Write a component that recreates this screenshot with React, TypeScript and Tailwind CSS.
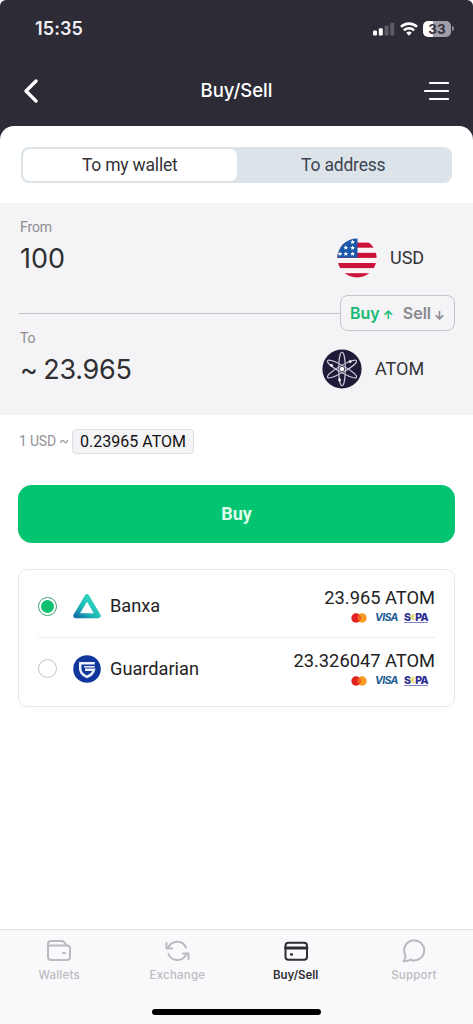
import React, { useState } from 'react';

type Side = 'buy' | 'sell';

interface Provider {
    id: string;
    name: string;
    amount: string;
    logo: React.ReactNode;
}

const StatusIcons: React.FC = () => (
    <div className="flex items-center">
        <svg width="22" height="14" viewBox="0 0 22 14" className="block">
            <rect x="0" y="8.5" width="4" height="5" rx="1" fill="#fff" />
            <rect x="5.8" y="6.2" width="4" height="7.3" rx="1" fill="#fff" />
            <rect x="11.6" y="3.4" width="4" height="10.1" rx="1" fill="#5c5c66" />
            <rect x="17.2" y="0.8" width="4" height="12.7" rx="1" fill="#5c5c66" />
        </svg>
        <svg width="18" height="14" viewBox="0 0 18 14" className="block ml-[5px]">
            <path d="M1 4.9a11.4 11.4 0 0 1 16 0" fill="none" stroke="#fff" strokeWidth="2.7" />
            <path d="M3.9 8.4a7.2 7.2 0 0 1 10.2 0" fill="none" stroke="#fff" strokeWidth="2.5" />
            <path d="M6.2 10.8a4 4 0 0 1 5.6 0L9 13.8Z" fill="#fff" />
        </svg>
        <div className="ml-[5px] h-4 w-7 rounded-[5px] bg-[linear-gradient(90deg,#fff_36%,#a09fa8_36%)] text-center font-['Inter'] text-[13.5px] leading-4 font-bold text-[#34333f]">33</div>
        <div className="ml-px h-[5px] w-[2px] rounded-r-full bg-[#8a8992]" />
    </div>
);

const UsFlag: React.FC = () => (
    <svg width="40" height="40" viewBox="0 0 40 40" className="block">
        <defs>
            <clipPath id="flag"><circle cx="20" cy="20" r="19.6" /></clipPath>
        </defs>
        <g clipPath="url(#flag)">
            <rect width="40" height="40" fill="#fbf3f5" />
            {[4.6, 14.8, 25, 35.2].map(y => (
                <rect key={y} x="0" y={y} width="40" height="5.1" fill="#cb1238" />
            ))}
            <rect width="20.5" height="19.8" fill="#1b57a8" />
            {[[15.6, 4], [8.8, 9.6], [15.6, 9.8], [3, 15.8], [8.8, 15.8], [15.6, 15.8]].map(([x, y]) => (
                <path key={`${x}-${y}`} transform={`translate(${x} ${y})`} d="M0-2.4.7-.8 2.3-.7 1.1.4 1.5 2 0 1.1-1.5 2-1.1.4-2.3-.7-.7-.8Z" fill="#fff" />
            ))}
        </g>
    </svg>
);

const AtomLogo: React.FC = () => (
    <svg width="40" height="40" viewBox="0 0 40 40" className="block">
        <circle cx="20" cy="20" r="19.6" fill="#1d1b38" />
        {[0, 60, 120].map(angle => (
            <ellipse key={angle} cx="20" cy="20" rx="3.3" ry="16.7" fill="none" stroke="#c9c8d6" strokeWidth="1.1" transform={`rotate(${angle} 20 20)`} />
        ))}
        <circle cx="20" cy="20" r="2.2" fill="#fff" />
        <circle cx="9.5" cy="16.3" r="1.4" fill="#fff" />
        <circle cx="28.2" cy="12.6" r="1.4" fill="#fff" />
        <circle cx="17.6" cy="31" r="1.4" fill="#fff" />
    </svg>
);

const BanxaLogo: React.FC = () => (
    <svg width="28" height="28" viewBox="0 0 28 28" className="block">
        <defs>
            <linearGradient id="banxa" x1="0" y1="1" x2="0.7" y2="0.2">
                <stop offset="0" stopColor="#1571ab" />
                <stop offset="0.45" stopColor="#1eb5b5" />
                <stop offset="1" stopColor="#2bd3bd" />
            </linearGradient>
        </defs>
        <path d="M14 4.7 25.2 23.7H2.8Z" fill="none" stroke="url(#banxa)" strokeWidth="5" strokeLinejoin="round" />
    </svg>
);

const GuardarianLogo: React.FC = () => (
    <svg width="28" height="28" viewBox="0 0 28 28" className="block">
        <circle cx="14" cy="14" r="13.8" fill="#12379c" />
        <path d="M21.8 8.3H7.2v5.2c0 4.2 2.8 6.7 6.8 8.4 3.9-1.7 6.4-4 6.9-7.1H12" fill="none" stroke="#eef2ff" strokeWidth="2.5" />
        <path d="M11 11.8h10.8" fill="none" stroke="#eef2ff" strokeWidth="1.5" />
    </svg>
);

const PaymentMethods: React.FC = () => (
    <div className="flex h-3 items-center pr-[7px]">
        <svg width="16" height="10" viewBox="0 0 16 10" className="block">
            <circle cx="11" cy="5" r="4.7" fill="#f59b1f" />
            <circle cx="5" cy="5" r="4.7" fill="#e3201f" />
            <path d="M8 1.4a4.7 4.7 0 0 1 0 7.2 4.7 4.7 0 0 1 0-7.2Z" fill="#f26122" />
        </svg>
        <span className="ml-[8px] w-[23px] font-['Inter'] text-[10.5px] leading-3 font-bold tracking-[-0.7px] italic text-[#1b5b93]">VISA</span>
        <span className="ml-[6px] flex h-[10px] w-6 justify-between border-b border-[#8587c4] font-['Inter'] text-[10.5px] leading-[9px] font-extrabold tracking-[-0.6px] text-[#2b2d8f]">
            S<span className="w-[5px] text-[8px] text-[#e6d45c]">€</span>PA
        </span>
    </div>
);

const providers: Provider[] = [
    { id: 'banxa', name: 'Banxa', amount: '23.965 ATOM', logo: <BanxaLogo /> },
    { id: 'guardarian', name: 'Guardarian', amount: '23.326047 ATOM', logo: <GuardarianLogo /> },
];

const tabs = [
    {
        label: 'Wallets',
        icon: (
            <>
                <rect x="2" y="6.5" width="22" height="14.5" rx="3" />
                <path d="M2 9.5V5a3 3 0 0 1 3-3h10.5Q17 2 18 3l2.5 3.5M17 14h2" />
            </>
        ),
    },
    {
        label: 'Exchange',
        icon: (
            <>
                <path d="M2.5 4v5.5h5.5M4.2 9A9.6 9.6 0 0 1 22 8.7" />
                <path d="M24.5 20v-5.5H19M22.3 15.2A9.6 9.6 0 0 1 4.5 15" />
            </>
        ),
    },
    {
        label: 'Buy/Sell',
        icon: (
            <>
                <rect x="2.5" y="3.7" width="21.5" height="17" rx="3" />
                <path d="M2.5 9h21.5" strokeWidth="2.8" />
                <path d="M8 15.5h1" strokeWidth="2.3" />
            </>
        ),
    },
    {
        label: 'Support',
        icon: <path d="M4.3 16A10 10 0 1 1 9.5 20.7Q6 22.6 2.5 22.3 4.8 19.5 4.3 16Z" />,
    },
];

const App: React.FC = () => {
    const [side, setSide] = useState<Side>('buy');
    const [target, setTarget] = useState('wallet');
    const [provider, setProvider] = useState('banxa');
    const [activeTab, setActiveTab] = useState('Buy/Sell');

    return (
        <div className="flex h-[1024px] w-[473px] flex-col overflow-hidden bg-white font-['Roboto',sans-serif] text-[#222]">
            <div className="bg-white">
                <div className="h-[140px] rounded-t-[6px] bg-[#2c2b36] text-white">
                    <div className="flex h-[57px] items-center justify-between pr-[19px] pl-[35px]">
                        <span className="font-['Inter'] text-[18px] font-semibold tracking-[0.1px] text-[#f1f1f6]">15:35</span>
                        <StatusIcons />
                    </div>
                    <div className="grid h-[68px] grid-cols-3 items-center pr-[24px] pl-[24px]">
                        <button aria-label="Back">
                            <svg width="14" height="24" viewBox="0 0 14 24" className="block">
                                <path d="M12 2 2 12l10 10" fill="none" stroke="#fff" strokeWidth="3.3" strokeLinecap="round" strokeLinejoin="round" />
                            </svg>
                        </button>
                        <h1 className="text-center font-['Inter'] text-[18.5px] font-medium">Buy/Sell</h1>
                        <button aria-label="Menu" className="justify-self-end">
                            <svg width="25" height="20" viewBox="0 0 25 20" className="block">
                                <path d="M6 2h18M1 10h23M6 18h18" stroke="#fff" strokeWidth="2.2" strokeLinecap="round" />
                            </svg>
                        </button>
                    </div>
                </div>
            </div>

            <main className="-mt-[14px] flex-1 rounded-t-[14px] bg-white">
                <div className="mt-[21px] ml-[21px] flex h-9 w-[431px] rounded-[8px] bg-[#dce4ea] p-[2px] text-[17.5px] tracking-[-0.2px] text-[#333338]">
                    <button onClick={() => setTarget('wallet')} className={target === 'wallet' ? 'w-1/2 rounded-[7px] bg-white' : 'w-1/2'}>To my wallet</button>
                    <button onClick={() => setTarget('address')} className={target === 'address' ? 'w-1/2 rounded-[7px] bg-white' : 'w-1/2 text-[#3b4350]'}>To address</button>
                </div>

                <section className="mt-[20px] h-[212px] bg-[#f4f4f6] pt-[16px] pr-[18px] pl-[19px]">
                    <div className="flex h-[76px] justify-between pl-px">
                        <div>
                            <div className="h-4 text-[14px] leading-4 tracking-[-0.1px] text-[#8c8c90]">From</div>
                            <div className="mt-[7px] font-['Inter'] text-[27px] leading-[34px] text-[#2f2f33]">100</div>
                        </div>
                        <div className="mt-[19px] flex h-10 w-[118px] items-center">
                            <UsFlag />
                            <span className="ml-[13px] -mt-px text-[18px] text-[#333338]">USD</span>
                        </div>
                    </div>
                    <div className="flex h-9 items-center">
                        <div className="h-px flex-1 bg-[#c3c6c9]" />
                        <div className="flex h-9 w-[115px] items-center rounded-[8px] border border-[#c3c6c9] pl-[9px] font-['Inter'] text-[16px] font-semibold whitespace-nowrap">
                            <button onClick={() => setSide('buy')} className={side === 'buy' ? 'flex items-center text-[#17bb74]' : 'flex items-center text-[#88888c]'}>
                                Buy<span className="mt-[3px] ml-[3px] w-[10px] text-[12px] leading-4 font-bold">↑</span>
                            </button>
                            <button onClick={() => setSide('sell')} className={side === 'sell' ? 'ml-[10px] flex items-center text-[#17bb74]' : 'ml-[10px] flex items-center text-[#88888c]'}>
                                Sell<span className="mt-[5px] ml-[3px] w-[10px] text-[12px] leading-4 font-bold">↓</span>
                            </button>
                        </div>
                    </div>
                    <div className="flex h-[84px] justify-between pl-px">
                        <div className="-mt-px">
                            <div className="h-4 text-[14px] leading-4 tracking-[-0.1px] text-[#8c8c90]">To</div>
                            <div className="mt-[7px] font-['Inter'] text-[27px] leading-[34px] tracking-[-0.3px] [word-spacing:-1.5px] text-[#2f2f33]">~ 23.965</div>
                        </div>
                        <div className="mt-[18px] flex h-10 w-[133px] items-center">
                            <AtomLogo />
                            <span className="ml-[13px] -mt-px text-[18px] text-[#333338]">ATOM</span>
                        </div>
                    </div>
                </section>

                <div className="mt-[14px] flex h-[25px] items-center pl-[19px]">
                    <span className="w-[49px] text-[14px] tracking-[-0.2px] whitespace-nowrap text-[#939397]">1 USD ~</span>
                    <span className="ml-[4px] flex h-[25px] w-[122px] items-center justify-center rounded-[4px] border border-[#dedfe2] bg-[#f4f4f6] text-[16px] text-[#111]">0.23965 ATOM</span>
                </div>

                <button className="mt-[31px] ml-[18px] block h-[58px] w-[437px] rounded-[14px] bg-[#03c470] pb-[2px] text-[18px] font-bold text-[#dffbec]">Buy</button>

                <div className="mt-[26px] ml-[18px] h-[138px] w-[437px] rounded-[9px] border border-[#e8e9eb] px-[19px] pt-[5px]">
                    {providers.map((item, index) => (
                        <div
                            key={item.id}
                            onClick={() => setProvider(item.id)}
                            className={index === 0 ? 'flex h-[63px] items-center border-b border-[#ececee]' : 'flex h-[61px] items-center'}
                        >
                            <span className={item.id === provider ? 'flex h-[19px] w-[19px] items-center justify-center rounded-full border border-[#3a9f75]' : 'h-[19px] w-[19px] rounded-full border border-[#c3c3c7]'}>
                                {item.id === provider && <span className="h-[13px] w-[13px] rounded-full bg-[#0bc06f]" />}
                            </span>
                            <span className="ml-[16px]">{item.logo}</span>
                            <span className="ml-[9px] text-[18.2px] leading-6">{item.name}</span>
                            <div className="-mt-px ml-auto flex flex-col items-end">
                                <span className="text-[18.3px] leading-[22px]">{item.amount}</span>
                                <div className="mt-[3px]">
                                    <PaymentMethods />
                                </div>
                            </div>
                        </div>
                    ))}
                </div>
            </main>

            <nav className="flex h-[95px] flex-col items-center border-t border-[#e1e2e4] bg-[#f9f9fb]">
                <div className="flex h-[79px] w-full">
                    {tabs.map(tab => (
                        <button
                            key={tab.label}
                            onClick={() => setActiveTab(tab.label)}
                            className={tab.label === activeTab ? 'flex w-1/4 flex-col items-center pt-[9px] text-[#2e2e34]' : 'flex w-1/4 flex-col items-center pt-[9px] text-[#b9bbbf]'}
                        >
                            <svg width="26" height="25" viewBox="0 0 26 25" className="block" fill="none" stroke="currentColor" strokeWidth="2" strokeLinecap="round" strokeLinejoin="round">
                                {tab.icon}
                            </svg>
                            <span className={tab.label === activeTab ? "mt-[3px] font-['Inter'] text-[11.5px] leading-4 font-semibold" : "mt-[3px] font-['Inter'] text-[11.5px] leading-4 font-medium tracking-[0.2px]"}>{tab.label}</span>
                        </button>
                    ))}
                </div>
                <div className="h-[6px] w-[169px] rounded-full bg-black" />
            </nav>
        </div>
    );
};

export default App;
